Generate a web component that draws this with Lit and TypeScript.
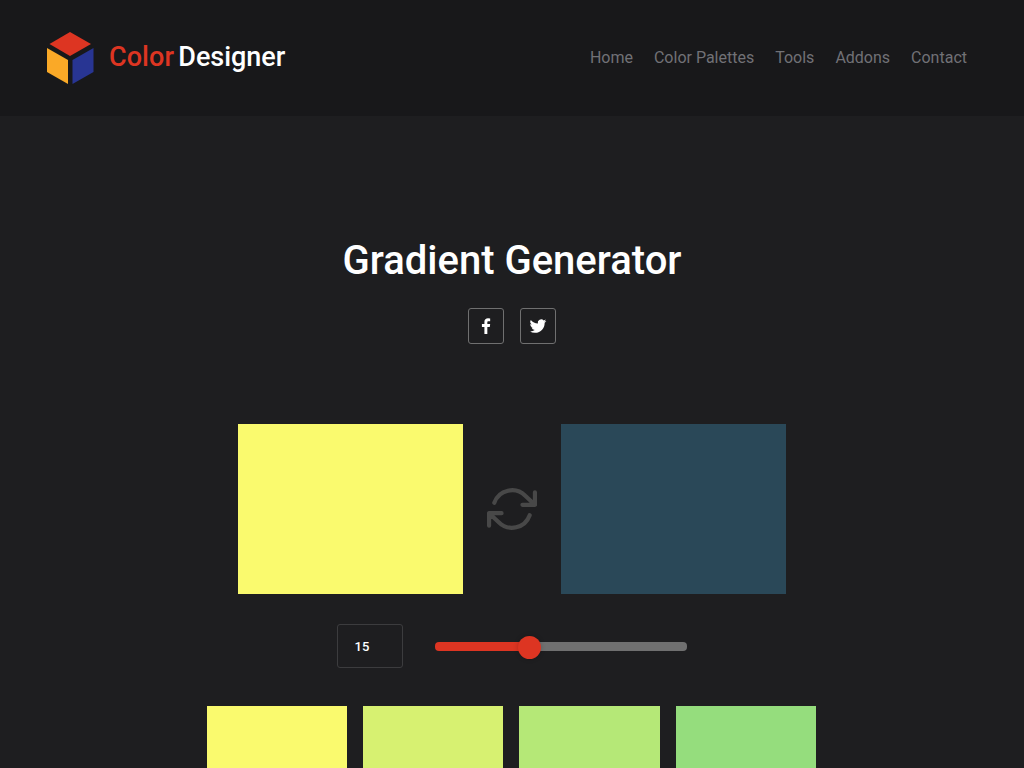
import { LitElement, html, css } from "lit";
import { customElement, state } from "lit/decorators.js";

@customElement("site-header")
class SiteHeader extends LitElement {
  static styles = css`
    :host { display: flex; justify-content: space-between; align-items: center; box-sizing: border-box;
      height: 116px; padding: 0 57px 0 46px; background: #18181a; }
    .brand { display: block; width: 240px; height: 52px; }
    .brand text { font: 500 27px Roboto, sans-serif; }
    nav { display: flex; gap: 21px; }
    a { color: #717176; font-size: 16px; line-height: 24px; text-decoration: none; }
  `;
  links = ["Home", "Color Palettes", "Tools", "Addons", "Contact"];
  render() {
    return html`
      <svg class="brand" viewBox="0 0 240 52">
        <path d="M24 0 45 12 24 24 3.500 12Z" fill="#dd3522" />
        <path d="M1 16 22 28V52L1 40Z" fill="#faa927" />
        <path d="M47.500 16 26.500 28V52L47.500 40Z" fill="#283593" />
        <text x="63" y="34" fill="#dd3522" textLength="65">Color</text>
        <text x="132.300" y="34" fill="#fff" textLength="107">Designer</text>
      </svg>
      <nav>${this.links.map((l) => html`<a>${l}</a>`)}</nav>
    `;
  }
}

@customElement("app-root")
class AppRoot extends LitElement {
  static styles = css`
    :host { display: block; height: 768px; overflow: hidden; background: #1e1e20; color: #fff;
      font-family: Roboto, sans-serif; }
    main { display: flex; flex-direction: column; align-items: center; padding-top: 121px; }
    h1 { margin: 0; font-size: 40px; line-height: 48px; font-weight: 500; }
    .share { display: flex; gap: 16px; margin-top: 23px; }
    .share a { box-sizing: border-box; width: 36px; height: 36px; border: 1px solid #707070; border-radius: 3px;
      display: flex; align-items: center; justify-content: center; }
    .pair { display: flex; align-items: center; gap: 24px; margin-top: 80px; }
    .pick { width: 225px; height: 170px; }
    .swap { display: block; width: 50px; height: 50px; }
    .steps { display: flex; align-items: center; gap: 32px; margin-top: 30px; }
    .count { box-sizing: border-box; width: 66px; height: 44px; padding-left: 16.500px; border: 1px solid #3c3c3e;
      border-radius: 3px; font-size: 13px; font-weight: 500; line-height: 43px; }
    .slider { display: flex; align-items: center; width: 252px; height: 23px; }
    .done, .rest { height: 9px; margin-top: 1px; }
    .done { flex: none; background: #dd3522; border-radius: 4px 0 0 4px; margin-right: -11px; }
    .rest { flex: 1; background: #707070; border-radius: 0 4px 4px 0; margin-left: -11px; }
    .thumb { z-index: 1; flex: none; width: 23px; height: 23px; border-radius: 50%; background: #dd3522;
      margin-top: 2px; box-shadow: 0 0 5px rgba(0, 0, 0, 0.2); }
    .shades { display: flex; gap: 16px; margin-top: 38px; padding-right: 1.200px; }
    .shade { width: 140.250px; height: 140px; }
  `;
  @state() from = "#fafa6e";
  @state() to = "#2a4858";
  @state() count = 15;
  shades = ["#fafa6e", "#d7f171", "#b5e877", "#95dd7d"];
  render() {
    return html`
      <site-header></site-header>
      <main>
        <h1>Gradient Generator</h1>
        <div class="share">
          <a><svg width="20" height="20" viewBox="0 0 24 24" fill="#fff"><path d="M13.600 21.500v-8.400h2.900l.5-3.500h-3.400V7.700c0-.93.3-1.500 1.600-1.500H17V2.900A22 22 0 0 0 14.500 2.700c-2.600 0-4.400 1.500-4.400 4.330V9.600H7.100v3.500h3v8.400z" /></svg></a>
          <a><svg width="20" height="20" viewBox="0 0 24 24" fill="#fff"><path d="M22 5.900a8.500 8.500 0 0 1-2.360.65 4.100 4.100 0 0 0 1.800-2.270 8.200 8.200 0 0 1-2.600 1 4.100 4.100 0 0 0-7 3.740 11.650 11.650 0 0 1-8.450-4.300 4.100 4.100 0 0 0 1.270 5.480A4.100 4.100 0 0 1 2.800 9.700v.05a4.100 4.100 0 0 0 3.290 4.020 4.100 4.100 0 0 1-1.850.07 4.100 4.100 0 0 0 3.830 2.850A8.230 8.230 0 0 1 2 18.400a11.600 11.600 0 0 0 6.290 1.840c7.550 0 11.680-6.250 11.680-11.670l-.01-.53A8.300 8.300 0 0 0 22 5.900z" /></svg></a>
        </div>
        <div class="pair">
          <div class="pick" style="background:${this.from}"></div>
          <svg class="swap" viewBox="0 0 24 24" fill="none" stroke="#484848" stroke-width="2" stroke-linecap="round" stroke-linejoin="round">
            <path d="M23 4v6h-6M1 20v-6h6M3.510 9a9 9 0 0 1 14.850-3.360L23 10M1 14l4.640 4.360A9 9 0 0 0 20.490 15" />
          </svg>
          <div class="pick" style="background:${this.to}"></div>
        </div>
        <div class="steps">
          <div class="count">${this.count}</div>
          <div class="slider">
            <div class="done" style="width:${(this.count - 1) * 6.7}px"></div>
            <div class="thumb"></div>
            <div class="rest"></div>
          </div>
        </div>
        <div class="shades">${this.shades.map((c) => html`<div class="shade" style="background:${c}"></div>`)}</div>
      </main>
    `;
  }
}
